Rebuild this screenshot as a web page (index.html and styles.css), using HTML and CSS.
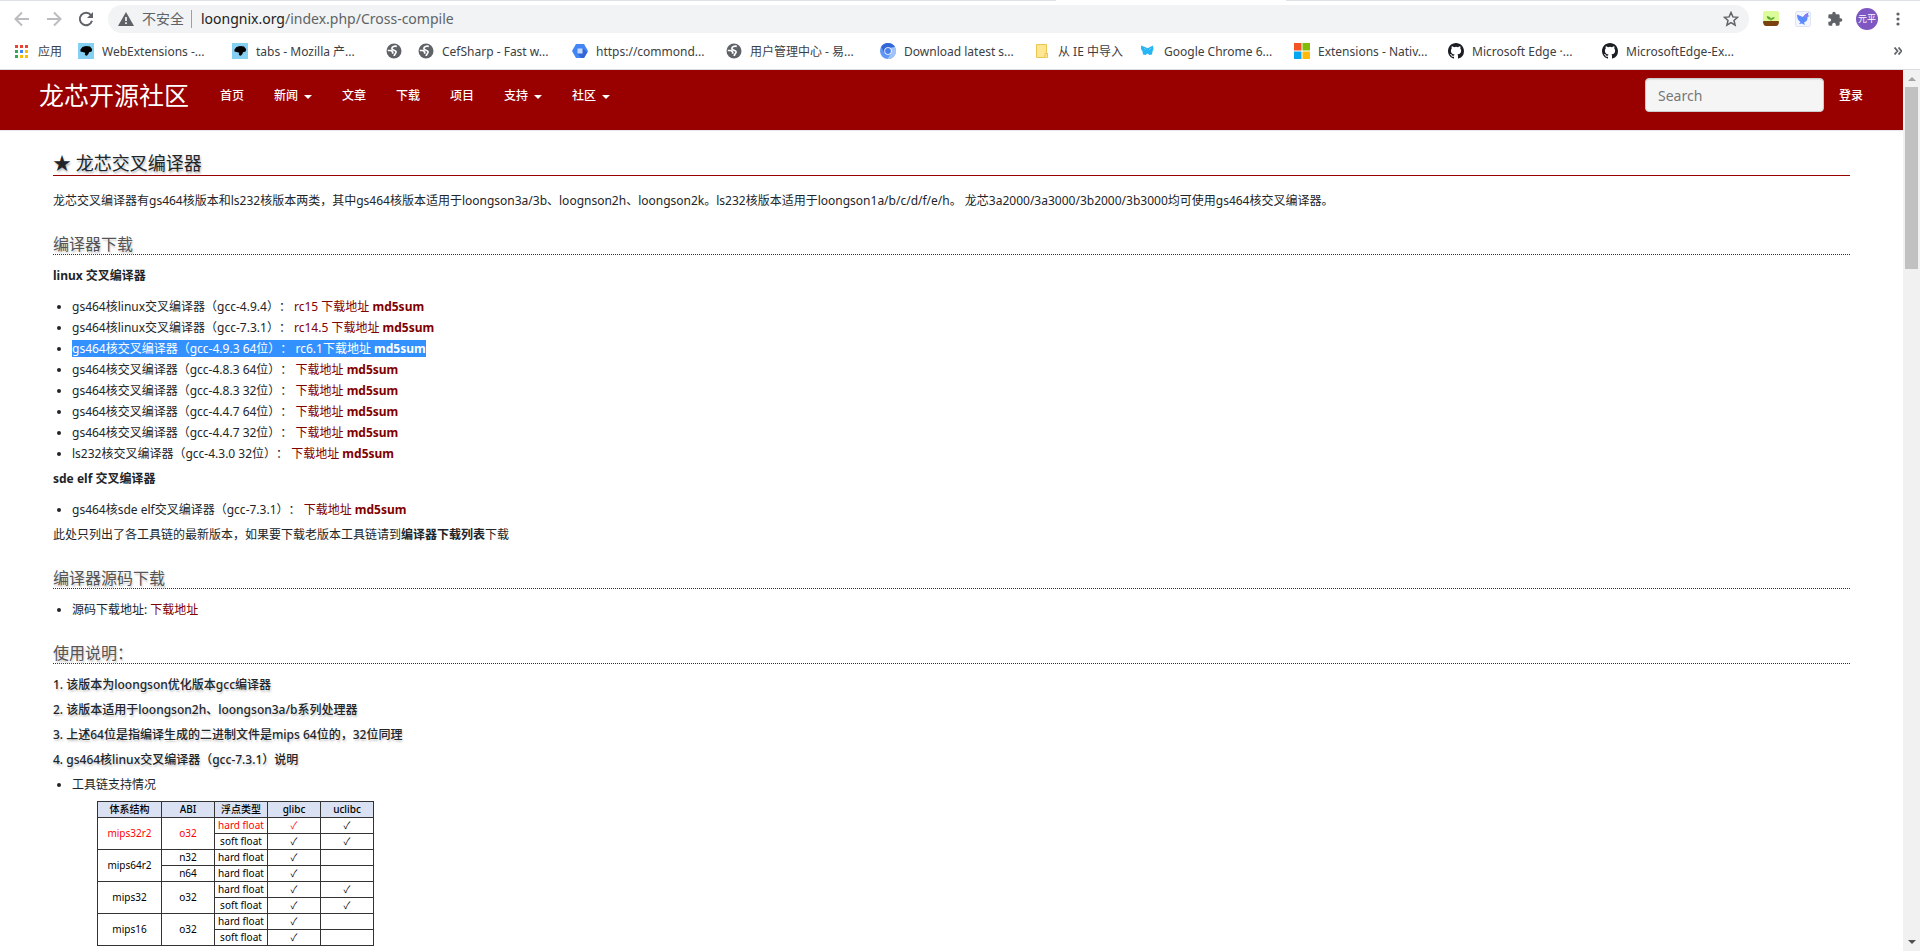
FILE: index.html
```html
<!DOCTYPE html>
<html lang="zh-CN">
<head>
<meta charset="utf-8">
<title>龙芯交叉编译器</title>
<link rel="stylesheet" href="styles.css">
</head>
<body>
<svg class="defs" aria-hidden="true">
  <symbol id="globe" viewBox="0 0 16 16"><circle cx="8" cy="8" r="7.500" fill="#5f6368"/><path d="M10.800 3.300C8.500 2.800 5.900 3.500 5.900 5.400c0 2.200 4 1.400 4.200 3.500.1 1.500-1.600 1.700-1.900 4.100M1.800 7.500h3.300l1.600 1.700v1.600" fill="none" stroke="#fff" stroke-width="1.700"/></symbol>
  <symbol id="dino" viewBox="0 0 16 16"><path fill="#83d0f2" d="M0 0h16v16H0z"/><path d="M2.500 6.500 4.500 4 8 3l4 .5 2.200 2.700-.6 2.300-2.600.7-.5 1.600-1.600 1.900L6.800 12l.4-2.300L4.600 9 2.400 8.400z"/></symbol>
  <symbol id="github" viewBox="0 0 16 16"><path fill="#1b1f23" d="M8 0C3.580 0 0 3.580 0 8c0 3.540 2.290 6.530 5.470 7.590.4.070.550-.170.550-.380 0-.190-.010-.820-.010-1.490-2.010.370-2.530-.490-2.690-.940-.090-.230-.480-.940-.820-1.130-.280-.150-.680-.520-.010-.530.630-.010 1.080.580 1.230.820.720 1.210 1.870.870 2.330.660.070-.520.280-.870.510-1.070-1.780-.200-3.640-.890-3.640-3.950 0-.870.310-1.590.820-2.150-.080-.200-.360-1.020.080-2.120 0 0 .670-.210 2.200.820a7.500 7.500 0 0 1 4 0c1.530-1.040 2.200-.820 2.200-.820.440 1.100.160 1.920.080 2.120.510.560.820 1.270.820 2.150 0 3.070-1.870 3.750-3.650 3.950.290.250.540.730.540 1.480 0 1.070-.010 1.930-.010 2.200 0 .210.150.460.550.380A8 8 0 0 0 16 8c0-4.420-3.580-8-8-8z"/></symbol>
</svg>

<div class="browser">
  <div class="tab-edge"><span></span><span></span></div>
  <div class="toolbar">
    <button class="tool" aria-label="后退"><svg width="16" height="16" viewBox="0 0 16 16" fill="none" stroke="#babcbe" stroke-width="2"><path d="M15 8H2M8 1.500 1.500 8 8 14.500"/></svg></button>
    <button class="tool" aria-label="前进"><svg width="16" height="16" viewBox="0 0 16 16" fill="none" stroke="#babcbe" stroke-width="2"><path d="M1 8h13M8 1.500 14.500 8 8 14.500"/></svg></button>
    <button class="tool" aria-label="刷新"><svg width="16" height="16" viewBox="0 0 16 16"><path d="M13 4.200A6.200 6.200 0 1 0 14 9.800" fill="none" stroke="#5f6368" stroke-width="2"/><path d="M15 1v6H9z" fill="#5f6368"/></svg></button>
    <div class="omnibox">
      <svg width="16" height="14" viewBox="0 0 16 14"><path d="M8 0 16 14H0z" fill="#5f6368"/><path d="M7.200 5h1.600v4H7.200zM7.200 10.300h1.600V12H7.200z" fill="#fff"/></svg>
      <span class="insecure">不安全</span>
      <span class="url"><b>loongnix.org</b>/index.php/Cross-compile</span>
      <button class="star" aria-label="收藏"><svg width="16" height="16" viewBox="0 0 16 16"><path d="m8 1.500 1.900 4.400 4.700.4-3.600 3.100 1.100 4.700L8 11.600l-4.100 2.500L5 9.400 1.400 6.300l4.700-.4z" fill="none" stroke="#5f6368" stroke-width="1.500"/></svg></button>
    </div>
    <div class="extensions">
      <svg width="16" height="16" viewBox="0 0 16 16"><rect width="16" height="12" rx="2" fill="#dcfb9b"/><path d="M0 11q0-1 1-1h14q1 0 1 1-.5 4-3 4H3q-2.500 0-3-4z" fill="#7a4210"/><path d="M8 10V8M8 8.500q-4 0-4-3 3.500 0 4 3 0-2 3.500-2-.5 2-3.500 2z" fill="#5ba82e" stroke="#5ba82e" stroke-width=".6"/></svg>
      <svg width="16" height="16" viewBox="0 0 16 16"><rect x=".5" y=".5" width="15" height="15" rx="1.500" fill="#f4f6ff" stroke="#e1e4f2"/><path d="M2 3.500 8 6q1.500-3 5.500-4.500L12.800 4l1.700 1-2 1q.5 4-3.500 5.500l1 2.500-3-1.500-3 .5 1.500-2Q2 9 2 3.500z" fill="#5b8cff"/><path d="M8 6q1.500-3 5.500-4.500L12.800 4 11 7z" fill="#8b7cf0"/></svg>
      <svg width="16" height="16" viewBox="0 0 24 24"><path fill="#5f6368" d="M20.500 11H19V7a2 2 0 0 0-2-2h-4V3.500a2.500 2.500 0 0 0-5 0V5H4a2 2 0 0 0-2 2v3.800h1.500a2.700 2.700 0 0 1 0 5.400H2V20a2 2 0 0 0 2 2h3.800v-1.500a2.700 2.700 0 0 1 5.400 0V22H17a2 2 0 0 0 2-2v-4h1.500a2.500 2.500 0 0 0 0-5z"/></svg>
      <span class="avatar">元平</span>
      <svg width="4" height="14" viewBox="0 0 4 14" fill="#5f6368"><circle cx="2" cy="2" r="1.600"/><circle cx="2" cy="7" r="1.600"/><circle cx="2" cy="12" r="1.600"/></svg>
    </div>
  </div>
  <nav class="bookmarks" aria-label="书签">
    <a class="apps" href="#"><svg width="13" height="13" viewBox="0 0 13 13"><path fill="#ea4335" d="M0 0h3v3H0zM5 0h3v3H5zM10 0h3v3h-3z"/><path fill="#34a853" d="M0 5h3v3H0zM0 10h3v3H0z"/><path fill="#4285f4" d="M5 5h3v3H5z"/><path fill="#fbbc04" d="M10 5h3v3h-3zM5 10h3v3H5zM10 10h3v3h-3z"/></svg>应用</a>
    <a class="mark" href="#"><svg><use href="#dino"/></svg>WebExtensions -...</a>
    <a class="mark" href="#"><svg><use href="#dino"/></svg>tabs - Mozilla 产...</a>
    <a class="mark icon-only" href="#" aria-label="书签"><svg><use href="#globe"/></svg></a>
    <a class="mark" href="#"><svg><use href="#globe"/></svg>CefSharp - Fast w...</a>
    <a class="mark" href="#"><svg viewBox="0 0 16 16"><path d="M4.500 1h7Q12 1 12.300 1.500L16 8l-3.700 6.500q-.3.500-.8.500h-7q-.5 0-.8-.5L0 8l3.700-6.500Q4 1 4.500 1z" fill="#4285f4"/><path d="m10.500 5.500 5 3.500-3.200 5.500q-.3.500-.8.500H9L5.500 10.500z" fill="#3367d6"/><path d="M5.500 5.500h5v5h-5z" fill="#c6dafc"/></svg>https://commond...</a>
    <a class="mark" href="#"><svg><use href="#globe"/></svg>用户管理中心 - 易...</a>
    <a class="mark" href="#"><svg viewBox="0 0 16 16"><circle cx="8" cy="8" r="8" fill="#5e97f6"/><path d="M1.100 4A8 8 0 0 1 14.900 4L8 4.500 4.500 10z" fill="#3367d6"/><path d="M14.900 4A8 8 0 0 1 7.500 16l3.700-6.200L11 5z" fill="#a1c2fa"/><circle cx="8" cy="8" r="3.700" fill="#fff"/><circle cx="8" cy="8" r="2.900" fill="#4a80e8"/></svg>Download latest s...</a>
    <a class="mark folder" href="#"><svg viewBox="0 0 16 16"><path d="M2.500 1.500h10v9h1v4h-11z" fill="#ffe694" stroke="#edc64f"/><path d="M11 14.500v-4h2.500v4" fill="#ffe694" stroke="#edc64f"/></svg>从 IE 中导入</a>
    <a class="mark" href="#"><svg viewBox="0 0 16 16"><path d="m1 2.500 4 1.500 2.500 1.200L10 4l3-1.500L13.500 6l-1 2.500-.5 3-2.500.5-2-1.500-2 1.500L3 11.500l-.5-3L1 6z" fill="#28b5f4"/><path d="m4.500 5.500 1 1M10.500 5.500l-1 1" stroke="#fff" stroke-width=".6"/></svg>Google Chrome 6...</a>
    <a class="mark" href="#"><svg viewBox="0 0 16 16"><path fill="#f35325" d="M0 0h7.500v7.500H0z"/><path fill="#81bc06" d="M8.500 0H16v7.500H8.500z"/><path fill="#05a6f0" d="M0 8.500h7.500V16H0z"/><path fill="#ffba08" d="M8.500 8.500H16V16H8.500z"/></svg>Extensions - Nativ...</a>
    <a class="mark" href="#"><svg><use href="#github"/></svg>Microsoft Edge ·...</a>
    <a class="mark" href="#"><svg><use href="#github"/></svg>MicrosoftEdge-Ex...</a>
    <button class="more" aria-label="更多书签"><svg width="8" height="8" viewBox="0 0 8 8" fill="none" stroke="#5f6368" stroke-width="1.800"><path d="m.5.5 3 3.500-3 3.500M4.500.5l3 3.500-3 3.500"/></svg></button>
  </nav>
</div>

<div class="viewport">
  <div class="page">
    <header class="navbar">
      <a class="brand" href="#">龙芯开源社区</a>
      <nav class="menu">
        <a href="#">首页</a>
        <a class="drop" href="#">新闻</a>
        <a href="#">文章</a>
        <a href="#">下载</a>
        <a href="#">项目</a>
        <a class="drop" href="#">支持</a>
        <a class="drop" href="#">社区</a>
      </nav>
      <input class="search" type="search" placeholder="Search" aria-label="Search">
      <a class="login" href="#">登录</a>
    </header>

    <main class="content">
      <h2>★ 龙芯交叉编译器</h2>
      <p>龙芯交叉编译器有gs464核版本和ls232核版本两类，其中gs464核版本适用于loongson3a/3b、loognson2h、loongson2k。ls232核版本适用于loongson1a/b/c/d/f/e/h。 龙芯3a2000/3a3000/3b2000/3b3000均可使用gs464核交叉编译器。</p>

      <h3>编译器下载</h3>
      <p><b>linux 交叉编译器</b></p>
      <ul>
        <li>gs464核linux交叉编译器（gcc-4.9.4）： <a href="#">rc15 下载地址</a> <a href="#"><b>md5sum</b></a></li>
        <li>gs464核linux交叉编译器（gcc-7.3.1）： <a href="#">rc14.5 下载地址</a> <a href="#"><b>md5sum</b></a></li>
        <li><span class="selected">gs464核交叉编译器（gcc-4.9.3 64位）： <a href="#">rc6.1下载地址</a> <a href="#"><b>md5sum</b></a></span></li>
        <li>gs464核交叉编译器（gcc-4.8.3 64位）： <a href="#">下载地址</a> <a href="#"><b>md5sum</b></a></li>
        <li>gs464核交叉编译器（gcc-4.8.3 32位）： <a href="#">下载地址</a> <a href="#"><b>md5sum</b></a></li>
        <li>gs464核交叉编译器（gcc-4.4.7 64位）： <a href="#">下载地址</a> <a href="#"><b>md5sum</b></a></li>
        <li>gs464核交叉编译器（gcc-4.4.7 32位）： <a href="#">下载地址</a> <a href="#"><b>md5sum</b></a></li>
        <li>ls232核交叉编译器（gcc-4.3.0 32位）： <a href="#">下载地址</a> <a href="#"><b>md5sum</b></a></li>
      </ul>
      <p><b>sde elf 交叉编译器</b></p>
      <ul>
        <li>gs464核sde elf交叉编译器（gcc-7.3.1）： <a href="#">下载地址</a> <a href="#"><b>md5sum</b></a></li>
      </ul>
      <p>此处只列出了各工具链的最新版本，如果要下载老版本工具链请到<b>编译器下载列表</b>下载</p>

      <h3>编译器源码下载</h3>
      <ul>
        <li>源码下载地址: <a href="#">下载地址</a></li>
      </ul>

      <h3>使用说明：</h3>
      <h4>1. 该版本为loongson优化版本gcc编译器</h4>
      <h4>2. 该版本适用于loongson2h、loongson3a/b系列处理器</h4>
      <h4>3. 上述64位是指编译生成的二进制文件是mips 64位的，32位同理</h4>
      <h4>4. gs464核linux交叉编译器（gcc-7.3.1）说明</h4>
      <ul>
        <li>工具链支持情况</li>
      </ul>
      <table class="support">
        <colgroup><col class="arch"><col><col><col><col></colgroup>
        <thead><tr><th>体系结构</th><th>ABI</th><th>浮点类型</th><th>glibc</th><th>uclibc</th></tr></thead>
        <tbody>
          <tr><td class="hot" rowspan="2">mips32r2</td><td class="hot" rowspan="2">o32</td><td class="hot">hard float</td><td class="hot">✓</td><td>✓</td></tr>
          <tr><td>soft float</td><td>✓</td><td>✓</td></tr>
          <tr><td rowspan="2">mips64r2</td><td>n32</td><td>hard float</td><td>✓</td><td></td></tr>
          <tr><td>n64</td><td>hard float</td><td>✓</td><td></td></tr>
          <tr><td rowspan="2">mips32</td><td rowspan="2">o32</td><td>hard float</td><td>✓</td><td>✓</td></tr>
          <tr><td>soft float</td><td>✓</td><td>✓</td></tr>
          <tr><td rowspan="2">mips16</td><td rowspan="2">o32</td><td>hard float</td><td>✓</td><td></td></tr>
          <tr><td>soft float</td><td>✓</td><td></td></tr>
        </tbody>
      </table>
    </main>
  </div>
  <div class="scrollbar" aria-hidden="true"><span class="arrow up"></span><span class="thumb"></span><span class="arrow down"></span></div>
</div>
</body>
</html>
```
FILE: styles.css
```css
* { box-sizing: border-box; }

body {
  margin: 0;
  height: 100vh;
  display: flex;
  flex-direction: column;
  overflow: hidden;
  background: #fff;
  color: #212529;
  font: 12px/21px "Noto Sans", "Noto Sans CJK SC", sans-serif;
  text-spacing-trim: space-all;
}

a { color: inherit; text-decoration: none; }
button { border: 0; padding: 0; background: none; display: flex; }
.defs { display: none; }

/* Browser frame */
.browser { flex: none; border-bottom: 1px solid #dadce0; }
.tab-edge { height: 1px; display: flex; justify-content: space-between; }
.tab-edge span { width: 55%; background: #dee1e6; }
.tab-edge span + span { width: 33%; }

.toolbar { display: flex; align-items: center; height: 36px; padding: 0 20px 0 14px; }
.tool { width: 32px; }
.tool:nth-child(3) { width: 30px; }
.omnibox {
  flex: 1;
  display: flex;
  align-items: center;
  height: 28px;
  padding: 0 10px;
  border-radius: 14px;
  background: #f1f3f4;
  color: #5f6368;
  font-size: 14px;
}
.insecure { margin-left: 8px; padding-right: 7px; line-height: 18px; border-right: 1px solid #9aa0a6; }
.url { margin-left: 9px; line-height: 18px; }
.url b { font-weight: 400; color: #202124; }
.star { margin-left: auto; }
.extensions { display: flex; align-items: center; gap: 16px; margin-left: 14px; }
.avatar {
  width: 22px;
  height: 22px;
  margin: 0 2px 0 -3px;
  border-radius: 50%;
  background: #7e57c2;
  color: #fff;
  font-size: 9px;
  line-height: 22px;
  text-align: center;
}

.bookmarks { display: flex; align-items: center; height: 32px; padding: 0 18px 4px 15px; color: #3c4043; white-space: nowrap; }
.apps { display: flex; align-items: center; gap: 10px; width: 63px; }
.mark { display: flex; align-items: center; gap: 8px; width: 154px; }
.mark svg { flex: none; width: 16px; height: 16px; }
.mark.icon-only { width: 32px; }
.mark.folder { width: 106px; }
.more { margin-left: auto; }

/* Site */
.viewport { flex: 1; min-height: 0; display: flex; }
.page { flex: 1; min-width: 0; overflow: hidden; }

.navbar {
  display: flex;
  align-items: flex-start;
  height: 61px;
  padding: 8px 40px 0 39px;
  background: #900;
  border-bottom: 1px solid #e7e7e7;
  color: #fff;
}
.brand { margin-right: 16px; font-size: 25px; line-height: 34px; }
.menu { display: flex; font-weight: 500; line-height: 36px; }
.menu a { padding: 0 15px; }
.drop::after {
  content: "";
  display: inline-block;
  margin-left: 6px;
  vertical-align: 1px;
  border: 4px solid transparent;
  border-top-color: #fff;
  border-bottom: 0;
}
.search {
  width: 179px;
  height: 34px;
  margin-left: auto;
  padding: 0 12px;
  border: 1px solid #ccc;
  border-radius: 4px;
  background: #f5f5f5;
  box-shadow: inset 0 1px 1px rgba(0, 0, 0, .08);
  font: 14px "Noto Sans", sans-serif;
}
.search::placeholder { color: #777; }
.login { margin-left: 15px; line-height: 36px; font-weight: 500; }

.content { padding: 20px 53px 0; }
h2, h3, h4 { margin: 0; font-weight: 400; }
h2 {
  line-height: 24px;
  margin-bottom: 14px;
  border-bottom: 1px solid #900;
  font-size: 18px;
  text-shadow: 1px 2px 2px #bbb;
}
h3 {
  line-height: 20px;
  margin: 23px 0 10px;
  border-bottom: 1px dotted #900;
  color: #555;
  font-size: 16px;
  text-shadow: 1px 2px 2px #ccc;
}
h4 { margin-bottom: 4px; font-size: 12px; font-weight: 500; text-shadow: 1px 2px 2px #ccc; }
p { margin: 0 0 10px; }
ul { margin: 0 0 4px; padding-left: 19px; }
li a { color: #800000; }
.selected, .selected a { background: #3390ff; color: #fff; }

.support { margin: 6px 0 0 44px; border-collapse: collapse; table-layout: fixed; color: #000; font-size: 10px; line-height: 15px; width: 276px; }
.support col { width: 53px; }
.support .arch { width: 64px; }
.support th, .support td { height: 16px; padding: 0; border: 1px solid #333; text-align: center; white-space: nowrap; }
.support th { background: #d9e1f2; font-weight: 500; }
.support .hot { color: #f00; }

.scrollbar { flex: none; width: 17px; display: flex; flex-direction: column; align-items: center; padding: 7px 0; background: #f1f1f1; }
.thumb { width: 13px; height: 182px; margin-top: 6px; background: #c1c1c1; }
.arrow { border: 4px solid transparent; }
.arrow.up { border-top: 0; border-bottom-color: #a3a3a3; }
.arrow.down { margin-top: auto; border-bottom: 0; border-top-color: #505050; }
```
